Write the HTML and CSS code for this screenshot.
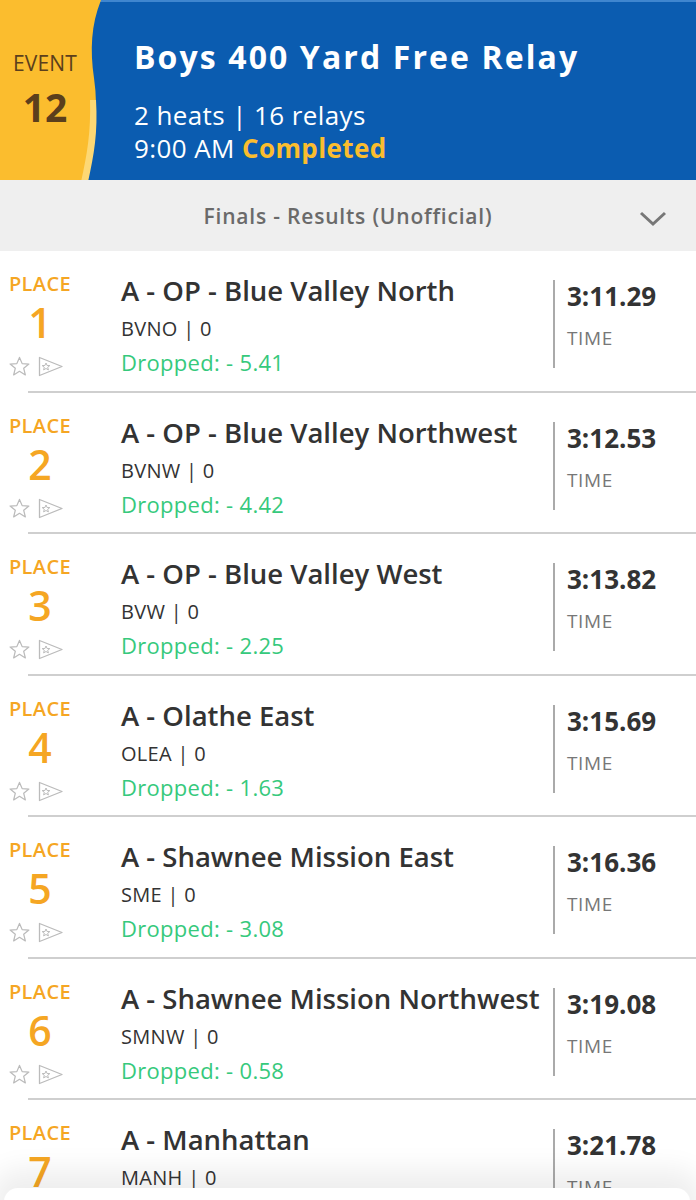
FILE: index.html
```html
<!DOCTYPE html>
<html>
<head>
<meta charset="utf-8">
<link rel="stylesheet" href="styles.css">
</head>
<body>
<header class="hdr">
  <div class="badge">
    <svg class="wave" width="110" height="182" viewBox="0 0 110 182">
      <path d="M0 0 H101 C91 25 90 50 94 78 C99 112 94 145 87 182 H0 Z" fill="#fbbd2e"/>
      <path d="M96 100 C98 132 94 155 88 182 H81 C87 155 91 132 90 100 Z" fill="#fdd874"/>
    </svg>
    <div class="badge-text">
      <div class="ev">EVENT</div>
      <div class="evnum">12</div>
    </div>
  </div>
  <div class="hinfo">
    <div class="title">Boys 400 Yard Free Relay</div>
    <div class="sub">2 heats | 16 relays</div>
    <div class="sub">9:00 AM <span class="done">Completed</span></div>
  </div>
</header>
<div class="bar">
  <span class="bar-text">Finals - Results (Unofficial)</span>
  <svg class="chev" width="28" height="18" viewBox="0 0 28 18"><path d="M2 3 L14 14 L26 3" fill="none" stroke="#777" stroke-width="3"/></svg>
</div>
<main class="list">
  <div class="row">
    <div class="place"><div class="pl">PLACE</div><div class="pn">1</div>
      <div class="icons"><svg class="star" width="23" height="23" viewBox="0 0 24 24"><path d="M12 2.5 L14.8 9 L21.8 9.4 L16.4 13.9 L18.1 20.8 L12 17 L5.9 20.8 L7.6 13.9 L2.2 9.4 L9.2 9 Z" fill="none" stroke="#bbb" stroke-width="1.3" stroke-linejoin="round"/></svg><svg class="flag" width="26" height="23" viewBox="0 0 26 22"><path d="M1.5 2 L24 11 L1.5 20 Z" fill="none" stroke="#bbb" stroke-width="1.3" stroke-linejoin="round"/><path d="M8 7.5 L9.1 10 L11.8 10.1 L9.7 11.8 L10.4 14.4 L8 13 L5.6 14.4 L6.3 11.8 L4.2 10.1 L6.9 10 Z" fill="none" stroke="#bbb" stroke-width="1"/></svg></div>
    </div>
    <div class="info"><div class="name">A - OP - Blue Valley North</div><div class="code">BVNO | 0</div><div class="drop">Dropped: - 5.41</div></div>
    <div class="tcol"><div class="time">3:11.29</div><div class="tl">TIME</div></div>
  </div>
  <div class="row">
    <div class="place"><div class="pl">PLACE</div><div class="pn">2</div>
      <div class="icons"><svg class="star" width="23" height="23" viewBox="0 0 24 24"><path d="M12 2.5 L14.8 9 L21.8 9.4 L16.4 13.9 L18.1 20.8 L12 17 L5.9 20.8 L7.6 13.9 L2.2 9.4 L9.2 9 Z" fill="none" stroke="#bbb" stroke-width="1.3" stroke-linejoin="round"/></svg><svg class="flag" width="26" height="23" viewBox="0 0 26 22"><path d="M1.5 2 L24 11 L1.5 20 Z" fill="none" stroke="#bbb" stroke-width="1.3" stroke-linejoin="round"/><path d="M8 7.5 L9.1 10 L11.8 10.1 L9.7 11.8 L10.4 14.4 L8 13 L5.6 14.4 L6.3 11.8 L4.2 10.1 L6.9 10 Z" fill="none" stroke="#bbb" stroke-width="1"/></svg></div>
    </div>
    <div class="info"><div class="name">A - OP - Blue Valley Northwest</div><div class="code">BVNW | 0</div><div class="drop">Dropped: - 4.42</div></div>
    <div class="tcol"><div class="time">3:12.53</div><div class="tl">TIME</div></div>
  </div>
  <div class="row">
    <div class="place"><div class="pl">PLACE</div><div class="pn">3</div>
      <div class="icons"><svg class="star" width="23" height="23" viewBox="0 0 24 24"><path d="M12 2.5 L14.8 9 L21.8 9.4 L16.4 13.9 L18.1 20.8 L12 17 L5.9 20.8 L7.6 13.9 L2.2 9.4 L9.2 9 Z" fill="none" stroke="#bbb" stroke-width="1.3" stroke-linejoin="round"/></svg><svg class="flag" width="26" height="23" viewBox="0 0 26 22"><path d="M1.5 2 L24 11 L1.5 20 Z" fill="none" stroke="#bbb" stroke-width="1.3" stroke-linejoin="round"/><path d="M8 7.5 L9.1 10 L11.8 10.1 L9.7 11.8 L10.4 14.4 L8 13 L5.6 14.4 L6.3 11.8 L4.2 10.1 L6.9 10 Z" fill="none" stroke="#bbb" stroke-width="1"/></svg></div>
    </div>
    <div class="info"><div class="name">A - OP - Blue Valley West</div><div class="code">BVW | 0</div><div class="drop">Dropped: - 2.25</div></div>
    <div class="tcol"><div class="time">3:13.82</div><div class="tl">TIME</div></div>
  </div>
  <div class="row">
    <div class="place"><div class="pl">PLACE</div><div class="pn">4</div>
      <div class="icons"><svg class="star" width="23" height="23" viewBox="0 0 24 24"><path d="M12 2.5 L14.8 9 L21.8 9.4 L16.4 13.9 L18.1 20.8 L12 17 L5.9 20.8 L7.6 13.9 L2.2 9.4 L9.2 9 Z" fill="none" stroke="#bbb" stroke-width="1.3" stroke-linejoin="round"/></svg><svg class="flag" width="26" height="23" viewBox="0 0 26 22"><path d="M1.5 2 L24 11 L1.5 20 Z" fill="none" stroke="#bbb" stroke-width="1.3" stroke-linejoin="round"/><path d="M8 7.5 L9.1 10 L11.8 10.1 L9.7 11.8 L10.4 14.4 L8 13 L5.6 14.4 L6.3 11.8 L4.2 10.1 L6.9 10 Z" fill="none" stroke="#bbb" stroke-width="1"/></svg></div>
    </div>
    <div class="info"><div class="name">A - Olathe East</div><div class="code">OLEA | 0</div><div class="drop">Dropped: - 1.63</div></div>
    <div class="tcol"><div class="time">3:15.69</div><div class="tl">TIME</div></div>
  </div>
  <div class="row">
    <div class="place"><div class="pl">PLACE</div><div class="pn">5</div>
      <div class="icons"><svg class="star" width="23" height="23" viewBox="0 0 24 24"><path d="M12 2.5 L14.8 9 L21.8 9.4 L16.4 13.9 L18.1 20.8 L12 17 L5.9 20.8 L7.6 13.9 L2.2 9.4 L9.2 9 Z" fill="none" stroke="#bbb" stroke-width="1.3" stroke-linejoin="round"/></svg><svg class="flag" width="26" height="23" viewBox="0 0 26 22"><path d="M1.5 2 L24 11 L1.5 20 Z" fill="none" stroke="#bbb" stroke-width="1.3" stroke-linejoin="round"/><path d="M8 7.5 L9.1 10 L11.8 10.1 L9.7 11.8 L10.4 14.4 L8 13 L5.6 14.4 L6.3 11.8 L4.2 10.1 L6.9 10 Z" fill="none" stroke="#bbb" stroke-width="1"/></svg></div>
    </div>
    <div class="info"><div class="name">A - Shawnee Mission East</div><div class="code">SME | 0</div><div class="drop">Dropped: - 3.08</div></div>
    <div class="tcol"><div class="time">3:16.36</div><div class="tl">TIME</div></div>
  </div>
  <div class="row">
    <div class="place"><div class="pl">PLACE</div><div class="pn">6</div>
      <div class="icons"><svg class="star" width="23" height="23" viewBox="0 0 24 24"><path d="M12 2.5 L14.8 9 L21.8 9.4 L16.4 13.9 L18.1 20.8 L12 17 L5.9 20.8 L7.6 13.9 L2.2 9.4 L9.2 9 Z" fill="none" stroke="#bbb" stroke-width="1.3" stroke-linejoin="round"/></svg><svg class="flag" width="26" height="23" viewBox="0 0 26 22"><path d="M1.5 2 L24 11 L1.5 20 Z" fill="none" stroke="#bbb" stroke-width="1.3" stroke-linejoin="round"/><path d="M8 7.5 L9.1 10 L11.8 10.1 L9.7 11.8 L10.4 14.4 L8 13 L5.6 14.4 L6.3 11.8 L4.2 10.1 L6.9 10 Z" fill="none" stroke="#bbb" stroke-width="1"/></svg></div>
    </div>
    <div class="info"><div class="name">A - Shawnee Mission Northwest</div><div class="code">SMNW | 0</div><div class="drop">Dropped: - 0.58</div></div>
    <div class="tcol"><div class="time">3:19.08</div><div class="tl">TIME</div></div>
  </div>
  <div class="row">
    <div class="place"><div class="pl">PLACE</div><div class="pn">7</div>
      <div class="icons"><svg class="star" width="23" height="23" viewBox="0 0 24 24"><path d="M12 2.5 L14.8 9 L21.8 9.4 L16.4 13.9 L18.1 20.8 L12 17 L5.9 20.8 L7.6 13.9 L2.2 9.4 L9.2 9 Z" fill="none" stroke="#bbb" stroke-width="1.3" stroke-linejoin="round"/></svg><svg class="flag" width="26" height="23" viewBox="0 0 26 22"><path d="M1.5 2 L24 11 L1.5 20 Z" fill="none" stroke="#bbb" stroke-width="1.3" stroke-linejoin="round"/><path d="M8 7.5 L9.1 10 L11.8 10.1 L9.7 11.8 L10.4 14.4 L8 13 L5.6 14.4 L6.3 11.8 L4.2 10.1 L6.9 10 Z" fill="none" stroke="#bbb" stroke-width="1"/></svg></div>
    </div>
    <div class="info"><div class="name">A - Manhattan</div><div class="code">MANH | 0</div><div class="drop">Dropped: - 1.20</div></div>
    <div class="tcol"><div class="time">3:21.78</div><div class="tl">TIME</div></div>
  </div>
</main>
<div class="sheet"></div>
</body>
</html>
```
FILE: styles.css
```css
* { box-sizing: border-box; }
html, body { margin: 0; padding: 0; }
body {
  width: 696px;
  height: 1200px;
  overflow: hidden;
  background: #fff;
  font-family: "Open Sans", "Noto Sans", sans-serif;
  color: #333;
}
.hdr {
  display: flex;
  height: 180px;
  background: #0b5cb0;
  border-top: 2px solid #3f86cf;
}
.badge {
  position: relative;
  width: 110px;
  flex: none;
}
.wave { position: absolute; left: 0; top: -2px; }
.badge-text {
  position: relative;
  width: 90px;
  padding-top: 47px;
  text-align: center;
  color: #5b3f1c;
}
.ev { font-size: 21px; line-height: 28px; letter-spacing: 0.2px; }
.evnum { font-size: 39px; font-weight: 700; line-height: 54px; margin-top: 3px; }
.hinfo {
  padding: 33px 0 0 24px;
  color: #fff;
}
.title { font-size: 32px; font-weight: 700; line-height: 44px; margin-bottom: 18px; letter-spacing: 2.1px; }
.sub { font-size: 26px; line-height: 36px; letter-spacing: 0.4px; }
.sub + .sub { margin-top: -3px; }
.done { color: #fbbd2e; font-weight: 700; }
.bar {
  height: 71px;
  background: #efefef;
  display: flex;
  align-items: center;
  justify-content: center;
  position: relative;
}
.bar-text { font-size: 21px; font-weight: 600; color: #6a6a6a; letter-spacing: 0.8px; }
.chev { position: absolute; right: 29px; top: 30px; }
.row {
  height: 141.5px;
  display: flex;
  border-bottom: 2px solid #cfcfcf;
  margin-left: 28px;
  padding-top: 20px;
}
.place {
  width: 80px;
  margin-left: -28px;
  padding-top: 2px;
  flex: none;
  text-align: center;
  color: #f5a623;
}
.pl { font-size: 20px; font-weight: 600; line-height: 22px; letter-spacing: 0.4px; }
.pn { font-size: 41px; font-weight: 600; line-height: 54px; }
.icons { display: flex; gap: 7px; padding-left: 8px; margin-top: 6px; }
.info { flex: 1; padding-left: 41px; min-width: 0; }
.name { font-size: 27.5px; font-weight: 600; line-height: 40px; color: #333; white-space: nowrap; }
.code { font-size: 20px; line-height: 32px; margin-top: 2px; letter-spacing: 0.3px; }
.drop { font-size: 22px; line-height: 34px; color: #36c97c; letter-spacing: 0.3px; }
.tcol {
  width: 143px;
  flex: none;
  border-left: 2px solid #aaa;
  height: 88px;
  margin-top: 9px;
  padding-left: 12px;
}
.time { font-size: 26px; font-weight: 700; line-height: 32px; }
.tl { font-size: 19px; color: #777; margin-top: 13px; letter-spacing: 0.6px; }
.sheet {
  position: fixed;
  left: 4px; right: 6px;
  top: 1188px;
  height: 40px;
  background: #fff;
  border-radius: 14px;
  box-shadow: 0 -6px 28px 12px rgba(0,0,0,0.07);
}
```
